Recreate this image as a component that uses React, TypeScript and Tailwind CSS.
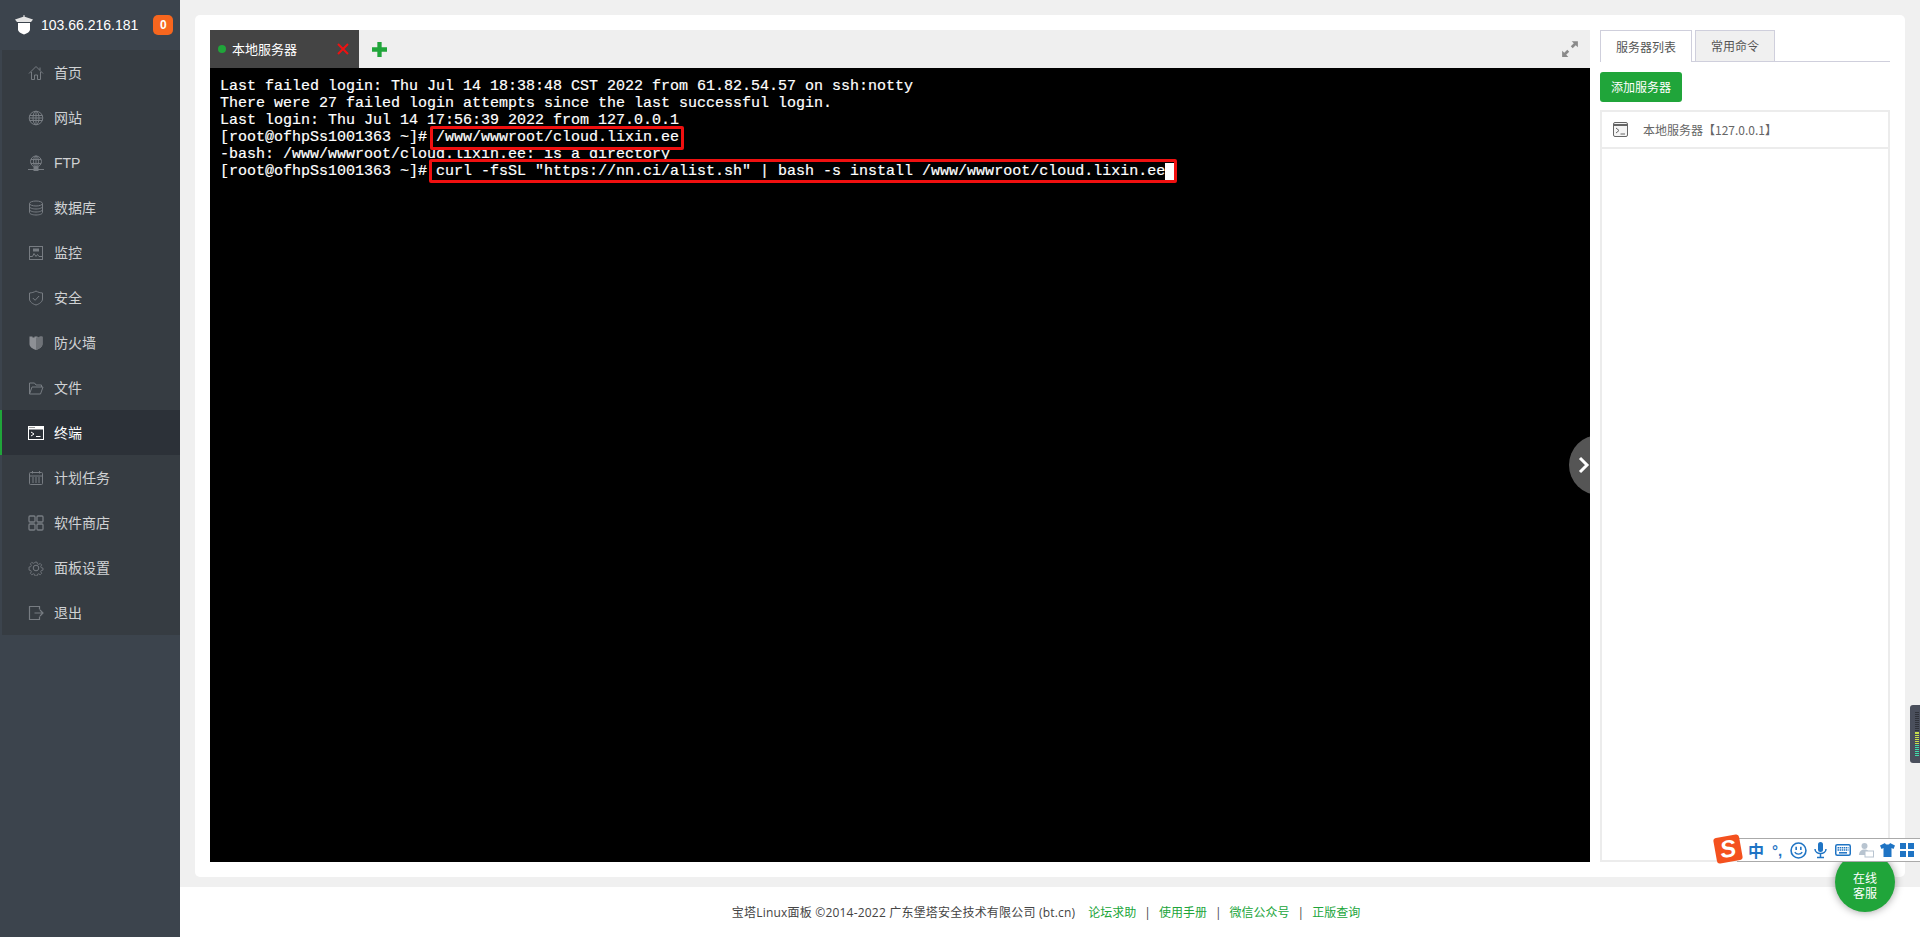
import React from "react";

const menuItems = [
  { name: "首页", icon: "home" },
  { name: "网站", icon: "globe" },
  { name: "FTP", icon: "ftp" },
  { name: "数据库", icon: "db" },
  { name: "监控", icon: "monitor" },
  { name: "安全", icon: "shield" },
  { name: "防火墙", icon: "wall" },
  { name: "文件", icon: "folder" },
  { name: "终端", icon: "term", active: true },
  { name: "计划任务", icon: "cal" },
  { name: "软件商店", icon: "grid" },
  { name: "面板设置", icon: "gear" },
  { name: "退出", icon: "exit" },
];

const termLines = [
  "Last failed login: Thu Jul 14 18:38:48 CST 2022 from 61.82.54.57 on ssh:notty",
  "There were 27 failed login attempts since the last successful login.",
  "Last login: Thu Jul 14 17:56:39 2022 from 127.0.0.1",
  "[root@ofhpSs1001363 ~]# /www/wwwroot/cloud.lixin.ee",
  "-bash: /www/wwwroot/cloud.lixin.ee: is a directory",
  '[root@ofhpSs1001363 ~]# curl -fsSL "https://nn.ci/alist.sh" | bash -s install /www/wwwroot/cloud.lixin.ee',
];

const MenuIcon = ({ type }: { type: string }) => {
  const common = {
    width: 16,
    height: 16,
    viewBox: "0 0 16 16",
    fill: "none",
    stroke: "#777c82",
    strokeWidth: 1,
  };
  switch (type) {
    case "home":
      return (
        <svg {...common}>
          <path d="M1 8.5 8 1.5l7 7M3.5 7v7.5h3V10h3v4.500h3V7M12 2.500v2.500" />
        </svg>
      );
    case "globe":
      return (
        <svg {...common}>
          <circle cx="8" cy="8" r="6.800" />
          <ellipse cx="8" cy="8" rx="3" ry="6.800" />
          <path d="M8 1.200v13.600M1.500 5.500h13M1.500 10.500h13M1.200 8h13.600" />
        </svg>
      );
    case "ftp":
      return (
        <svg {...common}>
          <circle cx="8" cy="6.500" r="5.500" />
          <ellipse cx="8" cy="6.500" rx="2.500" ry="5.500" />
          <path d="M8 1v11M3 4.500h10M3 8.500h10M0 14.500h6M10 14.500h6" />
          <rect x="6" y="12.500" width="4" height="3" fill="#777c82" />
        </svg>
      );
    case "db":
      return (
        <svg {...common}>
          <ellipse cx="8" cy="3.500" rx="6.500" ry="2.500" />
          <path d="M1.500 3.500v9c0 1.400 2.900 2.500 6.500 2.500s6.500-1.100 6.500-2.500v-9M1.500 6.500C1.500 7.900 4.400 9 8 9s6.500-1.100 6.500-2.500M1.500 9.500c0 1.400 2.900 2.500 6.500 2.500s6.500-1.100 6.500-2.500" />
        </svg>
      );
    case "monitor":
      return (
        <svg {...common}>
          <rect x="1.500" y="1.500" width="13" height="13" />
          <path d="M1.500 11.500h3l1.500-3 2 3 1.500-2 1.500 2h3.500" />
          <rect x="5" y="3.500" width="6" height="3" fill="#777c82" stroke="none" />
        </svg>
      );
    case "shield":
      return (
        <svg {...common}>
          <path d="M8 1C6 2.300 3.800 2.800 1.500 3v6c0 2.800 3 4.900 6.500 6 3.500-1.100 6.500-3.200 6.500-6V3C12.200 2.800 10 2.300 8 1Z" />
          <path d="m4.800 8 2.300 2.300 4-4.300" />
        </svg>
      );
    case "wall":
      return (
        <svg {...common}>
          <path
            d="M1.500 1.500h3v1h2v-1h3v1h2v-1h3V9c0 2.800-3 4.900-6.500 6-3.500-1.100-6.500-3.200-6.500-6Z"
            fill="#8d9095"
            stroke="none"
          />
          <path d="M8 2.500V15c3.500-1.100 6.500-3.200 6.500-6V2Z" fill="#6f7378" stroke="none" />
        </svg>
      );
    case "folder":
      return (
        <svg {...common}>
          <path d="M1.500 14V3h5l1.500 2h5.500v2M1.500 14h11l2.500-7H4Z" />
        </svg>
      );
    case "term":
      return (
        <svg width="16" height="14" viewBox="0 0 16 14" fill="none">
          <rect x="0.500" y="0.500" width="15" height="13" stroke="#fff" />
          <rect x="0" y="0" width="16" height="3.500" fill="#fff" />
          <path d="M3 6l3 2-3 2" stroke="#fff" />
          <path d="M8 10.500h4.500" stroke="#fff" />
          <path d="M1.500 1.500h1M3.500 1.500h1M5.500 1.500h1" stroke="#333" />
        </svg>
      );
    case "cal":
      return (
        <svg {...common}>
          <rect x="1.500" y="2.500" width="13" height="12" rx="1" />
          <path d="M4.500 1v2.500M11.500 1v2.500M1.500 6h13" />
          <path
            d="M4 8h2M7 8h2M10 8h2M4 10h2M7 10h2M10 10h2M4 12h2M7 12h2M10 12h2"
            strokeWidth="1"
          />
        </svg>
      );
    case "grid":
      return (
        <svg {...common} strokeWidth={1.300}>
          <rect x="1" y="1" width="6" height="6" rx="1" />
          <rect x="9" y="1" width="6" height="6" rx="1" />
          <rect x="1" y="9" width="6" height="6" rx="1" />
          <rect x="9" y="9" width="6" height="6" rx="1" />
        </svg>
      );
    case "gear":
      return (
        <svg {...common}>
          <path d="M6.800 1h2.400l.4 2 1.600.7 1.800-1.100 1.700 1.700-1.100 1.800.7 1.600 2 .4v2.400l-2 .4-.7 1.600 1.100 1.800-1.700 1.700-1.800-1.100-1.600.7-.4 2H6.800l-.4-2-1.600-.7-1.800 1.100-1.700-1.700 1.100-1.800-.7-1.600-2-.4V6.800l2-.4.700-1.600-1.100-1.800 1.700-1.700 1.800 1.100 1.600-.7Z" transform="translate(1.300 1.300) scale(.84)" />
          <circle cx="8" cy="8" r="2.800" />
        </svg>
      );
    default:
      return (
        <svg {...common}>
          <path d="M11.500 4.500V1.500h-10v13h10v-3M6.500 8H15M12 5l3 3-3 3" strokeWidth="1.200" />
        </svg>
      );
  }
};

const Sidebar = () => (
  <aside className="w-[180px] shrink-0 bg-[#3c444d]">
    <div className="flex h-[50px] items-center pl-[15px]">
      <svg width="18" height="20" viewBox="0 0 18 20" className="mr-[8px]">
        <path d="M0 4.500 9 1.500l9 3-2 2.500H2Z" fill="#e4e4e4" />
        <path d="M9 0v2" stroke="#e4e4e4" />
        <path d="M3 8h12v6.500c0 2.300-2.800 3.800-6 5-3.200-1.200-6-2.700-6-5Z" fill="#fff" />
      </svg>
      <span className="font-['Liberation_Sans',sans-serif] text-[14px] text-white">103.66.216.181</span>
      <span className="ml-[15px] flex h-[20px] w-[20px] items-center justify-center rounded-[5px] bg-[#f7661e] font-['Liberation_Sans',sans-serif] text-[12px] font-bold text-white">
        0
      </span>
    </div>
    <ul className="bg-[#363c42]">
      {menuItems.map((item) => (
        <li
          key={item.name}
          className={
            item.active
              ? "flex h-[45px] items-center border-l-2 border-[#20a53a] bg-[#2c3138] pl-[26px] text-white"
              : "flex h-[45px] items-center border-l-2 border-[#3c444d] pl-[26px] text-[#d0d2d4]"
          }
        >
          <span className="mr-[10px] flex w-[16px] justify-center">
            <MenuIcon type={item.icon} />
          </span>
          <span className="pt-[1px] font-['Liberation_Sans','Noto_Sans_CJK_SC',sans-serif] text-[14px]">{item.name}</span>
        </li>
      ))}
    </ul>
  </aside>
);

const Terminal = () => (
  <div className="relative flex w-[1380px] shrink-0 flex-col overflow-hidden">
    <div className="flex h-[38px] shrink-0 items-center bg-[#efefef]">
      <div className="flex h-full w-[149px] items-center bg-[#444444] pl-[8px]">
        <span className="h-[8px] w-[8px] rounded-full bg-[#20a53a]" />
        <span className="ml-[6px] font-['Noto_Sans_CJK_SC',sans-serif] text-[13px] text-white">本地服务器</span>
        <svg width="12" height="12" viewBox="0 0 12 12" className="ml-[40px]">
          <path d="M1 1l10 10M11 1 1 11" stroke="#ee1111" strokeWidth="2" />
        </svg>
      </div>
      <svg width="15" height="15" viewBox="0 0 14 14" className="ml-[13px]">
        <path d="M7 0v14M0 7h14" stroke="#20a53a" strokeWidth="4" />
      </svg>
      <svg width="18" height="18" viewBox="0 0 16 16" className="ml-auto mr-[11px]">
        <path d="M9.500 1H15v5.500l-1.900-1.900-2.700 2.700-1.700-1.700 2.700-2.700Z" fill="#8a8a8a" />
        <path d="M6.500 15H1V9.500l1.900 1.900 2.700-2.700 1.700 1.700-2.700 2.700Z" fill="#8a8a8a" />
      </svg>
    </div>
    <div className="relative flex-1 bg-black pl-[10px] pt-[10px]">
      <pre className="font-['Liberation_Mono',monospace] text-[15px] leading-[17px] text-white [-webkit-text-stroke:0.2px_#ffffff]">
        {termLines.map((line) => (
          <div key={line}>{line}</div>
        ))}
      </pre>
      <span className="absolute left-[955px] top-[95px] h-[17px] w-[9px] bg-white" />
      <div className="absolute left-[220px] top-[58px] h-[24px] w-[254px] rounded-[2px] border-[3px] border-[#f01010]" />
      <div className="absolute left-[219px] top-[91px] h-[24px] w-[748px] rounded-[2px] border-[3px] border-[#f01010] bg-transparent" />
      <div className="absolute left-[1359px] top-[367px] flex h-[60px] w-[60px] items-center rounded-full bg-[#555555] pl-[8px]">
        <svg width="14" height="18" viewBox="0 0 14 18" fill="none">
          <path d="M3 2l7 7-7 7" stroke="#fff" strokeWidth="3" />
        </svg>
      </div>
    </div>
  </div>
);

const ServerPanel = () => (
  <div className="ml-[10px] flex w-[290px] shrink-0 flex-col font-['Noto_Sans_CJK_SC',sans-serif] text-[12px]">
    <div className="flex h-[32px] border-b border-[#cfcfdc]">
      <div className="flex h-[32px] w-[92px] items-center justify-center border border-b-0 border-[#cfcfdc] bg-white text-[#555]">
        服务器列表
      </div>
      <div className="ml-[3px] flex h-[31px] w-[80px] items-center justify-center border border-b-0 border-[#cfcfdc] bg-[#f0f0f0] text-[#555]">
        常用命令
      </div>
    </div>
    <div className="mt-[10px] flex h-[30px] w-[82px] items-center justify-center rounded-[3px] bg-[#20a53a] text-white">
      添加服务器
    </div>
    <div className="mt-[8px] flex-1 border-2 border-[#ececec]">
      <div className="flex h-[37px] items-center border-b-2 border-[#ececec] pl-[11px] text-[#666]">
        <svg width="16" height="16" viewBox="0 0 16 16" fill="none">
          <rect x="0.500" y="0.500" width="14" height="14" rx="1.500" fill="#f4f4f4" stroke="#666" />
          <path d="M1 3h13" stroke="#666" strokeWidth="2" />
          <path d="M3 6l3 2.500L3 11M7.500 12H12" stroke="#666" />
        </svg>
        <span className="ml-[14px]">本地服务器【127.0.0.1】</span>
      </div>
    </div>
  </div>
);

const Footer = () => (
  <footer className="flex h-[50px] shrink-0 items-center justify-center bg-white pr-[8px] pt-[2px] font-['Open_Sans','Noto_Sans_CJK_SC',sans-serif] text-[12px] text-[#444]">
    <span className="tracking-[0.2px]">宝塔Linux面板 ©2014-2022 广东堡塔安全技术有限公司 (bt.cn)</span>
    <span className="ml-[13px] text-[#20a53a]">论坛求助</span>
    <span className="mx-[8px]">|</span>
    <span className="text-[#20a53a]">使用手册</span>
    <span className="mx-[8px]">|</span>
    <span className="text-[#20a53a]">微信公众号</span>
    <span className="mx-[8px]">|</span>
    <span className="text-[#20a53a]">正版查询</span>
  </footer>
);

const ImeBar = () => (
  <>
    <div className="absolute left-[1835px] top-[852px] flex h-[60px] w-[60px] items-center justify-center rounded-full bg-[#20a53a] pt-[5px] text-center font-['Noto_Sans_CJK_SC',sans-serif] text-[12px] leading-[15px] text-white shadow-[0_0_8px_rgba(0,0,0,0.4)]">
      在线
      <br />
      客服
    </div>
    <div className="absolute left-[1737px] top-[838px] flex h-[24px] w-[183px] items-center border-y border-[#aaaaaa] bg-white pl-[11px] text-[#1f74c4]">
      <span className="font-['Noto_Sans_CJK_SC',sans-serif] text-[16px] font-bold leading-none">中</span>
      <span className="ml-[8px] font-['Liberation_Sans',sans-serif] text-[15px] font-bold leading-none">°,</span>
      <svg width="17" height="17" viewBox="0 0 16 16" fill="none" className="ml-[8px]">
        <circle cx="8" cy="8" r="7" stroke="#1f74c4" strokeWidth="1.500" />
        <path d="M4.500 9.500c1.500 2.500 5.500 2.500 7 0" stroke="#1f74c4" strokeWidth="1.300" />
        <path d="M5.800 4.500v3M10.200 4.500v3" stroke="#1f74c4" strokeWidth="1.500" />
      </svg>
      <svg width="13" height="17" viewBox="0 0 13 17" fill="none" className="ml-[7px]">
        <rect x="4" y="0" width="5" height="10" rx="2.500" fill="#1f74c4" />
        <path d="M1 7c0 6 11 6 11 0M6.500 12v3M3 15.500h7" stroke="#1f74c4" strokeWidth="1.500" />
      </svg>
      <svg width="16" height="12" viewBox="0 0 16 12" fill="none" className="ml-[8px]">
        <rect x="0.750" y="0.750" width="14.500" height="10.500" rx="1.500" stroke="#1f74c4" strokeWidth="1.500" />
        <path d="M2.500 3.700h11M2.500 6h11" stroke="#1f74c4" strokeWidth="1.500" strokeDasharray="1.500 .6" />
        <path d="M4 8.800h8" stroke="#1f74c4" strokeWidth="1.500" />
      </svg>
      <svg width="16" height="16" viewBox="0 0 16 16" className="ml-[7px]">
        <circle cx="6.500" cy="4" r="3" fill="#b8c4d0" />
        <path d="M1 13c0-3.500 2.500-5.500 5.500-5.500S12 9.500 12 13Z" fill="#b8c4d0" />
        <rect x="7" y="9" width="8.500" height="6" fill="#fff" stroke="#b8c4d0" />
      </svg>
      <svg width="15" height="14" viewBox="0 0 15 14" className="ml-[6px]">
        <path d="M5 0 0 2.500 1.500 6 3.500 5v9h8V5l2 1L15 2.500 10 0c-.5 2-4.500 2-5 0Z" fill="#1f74c4" />
      </svg>
      <svg width="14" height="14" viewBox="0 0 14 14" className="ml-[5px]">
        <path d="M0 0h6v6H0ZM8 0h6v6H8ZM0 8h6v6H0ZM8 8h6v6H8Z" fill="#1f74c4" />
      </svg>
    </div>
    <div className="absolute left-[1715px] top-[836px] flex h-[26px] w-[26px] rotate-[-10deg] items-center justify-center rounded-[3px] bg-[#f4511e] font-['Liberation_Sans',sans-serif] text-[24px] font-bold italic leading-none text-white">
      S
    </div>
    <div className="absolute left-[1910px] top-[705px] flex h-[58px] w-[10px] flex-col items-end gap-[1px] rounded-l-[3px] bg-[#4a4f5c] py-[7px]">
      {Array.from({ length: 23 }).map((_, i) => (
        <span
          key={i}
          className={
            i < 10
              ? "mr-[1px] h-[1px] w-[4px] bg-[#2f323a]"
              : i < 17
                ? "mr-[1px] h-[1px] w-[4px] bg-[#c8e04a]"
                : "mr-[1px] h-[1px] w-[4px] bg-[#40dca8]"
          }
        />
      ))}
    </div>
  </>
);

export default function App() {
  return (
    <div className="relative flex h-[937px] w-[1920px] overflow-hidden bg-[#f0f0f0]">
      <Sidebar />
      <main className="flex min-w-0 flex-1 flex-col">
        <div className="flex-1 p-[15px] pr-[15px] pb-[10px]">
          <div className="flex h-full rounded-[5px] bg-white p-[15px]">
            <Terminal />
            <ServerPanel />
          </div>
        </div>
        <Footer />
      </main>
      <ImeBar />
    </div>
  );
}
